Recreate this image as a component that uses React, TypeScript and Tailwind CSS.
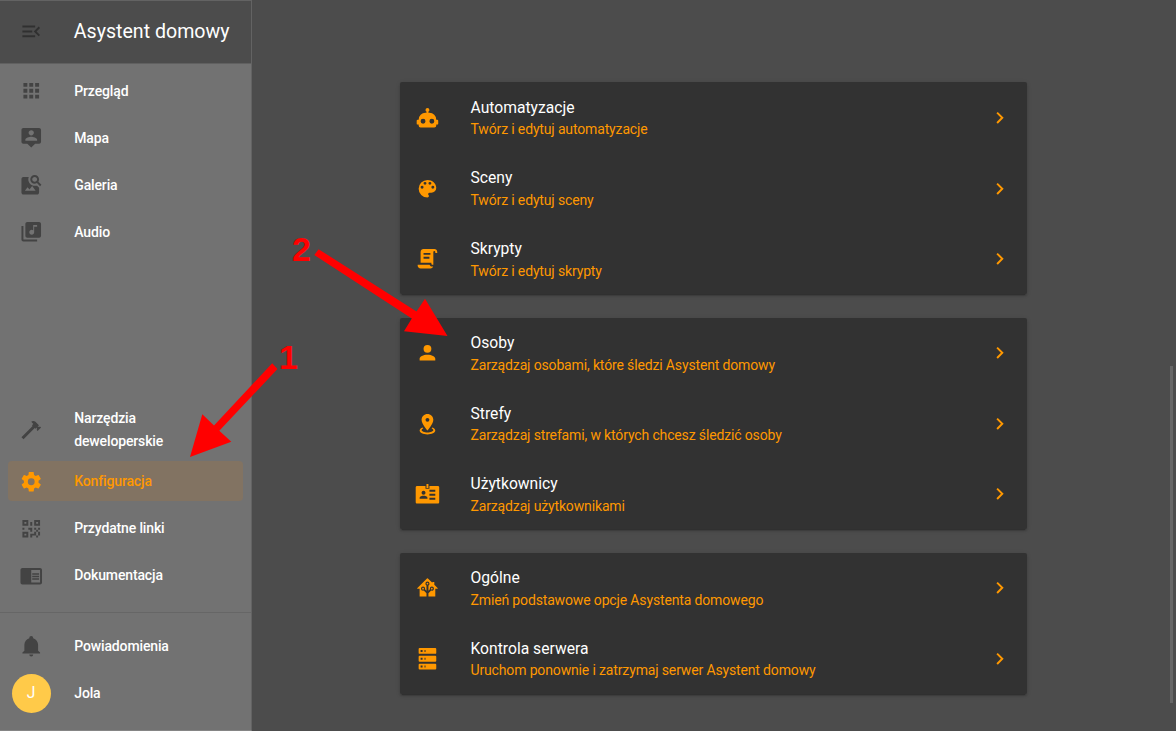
import React from "react";

const icons = {
  menuOpen:
    "M21,15.61L19.59,17L14.58,12L19.59,7L21,8.39L17.44,12L21,15.61M3,6H16V8H3V6M3,13V11H13V13H3M3,18V16H16V18H3Z",
  apps: "M16,20H20V16H16M16,14H20V10H16M10,8H14V4H10M16,8H20V4H16M10,14H14V10H10M4,14H8V10H4M4,20H8V16H4M10,20H14V16H10M4,8H8V4H4V8Z",
  tooltipAccount:
    "M20 2H4C2.89 2 2 2.89 2 4V16C2 17.11 2.9 18 4 18H8L12 22L16 18H20C21.11 18 22 17.11 22 16V4C22 2.89 21.1 2 20 2M12 4.3C13.5 4.3 14.7 5.5 14.7 7S13.5 9.7 12 9.7 9.3 8.5 9.3 7 10.5 4.3 12 4.3M18 15H6V14.1C6 12.1 10 11 12 11S18 12.1 18 14.1V15Z",
  imageSearch:
    "M15.5,9C16.2,9 16.79,8.76 17.27,8.27C17.76,7.79 18,7.2 18,6.5C18,5.83 17.76,5.23 17.27,4.73C16.79,4.23 16.2,4 15.5,4C14.83,4 14.23,4.23 13.73,4.73C13.23,5.23 13,5.83 13,6.5C13,7.2 13.23,7.79 13.73,8.27C14.23,8.76 14.83,9 15.5,9M19.31,8.91L22.41,12L21,13.41L17.86,10.31C17.08,10.78 16.28,11 15.47,11C14.22,11 13.16,10.58 12.3,9.7C11.45,8.83 11,7.77 11,6.5C11,5.27 11.45,4.2 12.33,3.33C13.2,2.45 14.27,2 15.5,2C16.77,2 17.83,2.45 18.7,3.33C19.58,4.2 20,5.27 20,6.5C20,7.33 19.78,8.13 19.31,8.91M16.5,18H5.5L8.25,14.5L10.22,16.83L12.94,13.31L16.5,18M18,13L20,15V20C20,20.55 19.81,21 19.41,21.4C19,21.79 18.53,22 18,22H4C3.45,22 3,21.79 2.6,21.4C2.21,21 2,20.55 2,20V6C2,5.47 2.21,5 2.6,4.59C3,4.19 3.45,4 4,4H9.5C9.2,4.64 9.03,5.31 9,6C9,8 9.5,9.5 10.75,10.95C12.06,12.45 13.5,13 15.5,13C16.4,13 17.2,12.85 18,13Z",
  musicBox:
    "M20 2H8c-1.1 0-2 .9-2 2v12c0 1.1.9 2 2 2h12c1.1 0 2-.9 2-2V4c0-1.1-.9-2-2-2zm-2 5h-3v5.5c0 1.38-1.12 2.5-2.5 2.5S10 13.88 10 12.5s1.12-2.5 2.5-2.5c.57 0 1.08.19 1.5.51V5h4v2zM4 6H2v14c0 1.1.9 2 2 2h14v-2H4V6z",
  hammer:
    "M2,19.63L13.43,8.2L12.72,7.5L14.14,6.07L12,3.89C13.2,2.7 15.09,2.7 16.27,3.89L19.87,7.5L18.45,8.91H21.29L22,9.62L18.45,13.21L17.74,12.5V9.62L16.27,11.04L15.56,10.33L4.13,21.76L2,19.63Z",
  cog: "M12,15.5A3.5,3.5 0 0,1 8.5,12A3.5,3.5 0 0,1 12,8.5A3.5,3.5 0 0,1 15.5,12A3.5,3.5 0 0,1 12,15.5M19.43,12.97C19.47,12.65 19.5,12.33 19.5,12C19.5,11.67 19.47,11.34 19.43,11L21.54,9.37C21.73,9.22 21.78,8.95 21.66,8.73L19.66,5.27C19.54,5.05 19.27,4.96 19.05,5.05L16.56,6.05C16.04,5.66 15.5,5.32 14.87,5.07L14.5,2.42C14.46,2.18 14.25,2 14,2H10C9.75,2 9.54,2.18 9.5,2.42L9.13,5.07C8.5,5.32 7.96,5.66 7.44,6.05L4.95,5.05C4.73,4.96 4.46,5.05 4.34,5.27L2.34,8.73C2.21,8.95 2.27,9.22 2.46,9.37L4.57,11C4.53,11.34 4.5,11.67 4.5,12C4.5,12.33 4.53,12.65 4.57,12.97L2.46,14.63C2.27,14.78 2.21,15.05 2.34,15.27L4.34,18.73C4.46,18.95 4.73,19.03 4.95,18.95L7.44,17.94C7.96,18.34 8.5,18.68 9.13,18.93L9.5,21.58C9.54,21.82 9.75,22 10,22H14C14.25,22 14.46,21.82 14.5,21.58L14.87,18.93C15.5,18.67 16.04,18.34 16.56,17.94L19.05,18.95C19.27,19.03 19.54,18.95 19.66,18.73L21.66,15.27C21.78,15.05 21.73,14.78 21.54,14.63L19.43,12.97Z",
  qrcode:
    "M3,11H5V13H3V11M11,5H13V9H11V5M9,11H13V15H11V13H9V11M15,11H17V13H19V11H21V13H19V15H21V19H19V21H17V19H13V21H11V17H15V15H17V13H15V11M19,19V15H17V19H19M15,3H21V9H15V3M17,5V7H19V5H17M3,3H9V9H3V3M5,5V7H7V5H5M3,15H9V21H3V15M5,17V19H7V17H5Z",
  reader:
    "M13 12h7v1.5h-7zm0-2.5h7V11h-7zm0 5h7V16h-7zM21 4H3c-1.1 0-2 .9-2 2v13c0 1.1.9 2 2 2h18c1.1 0 2-.9 2-2V6c0-1.1-.9-2-2-2zm0 15h-9V6h9v13z",
  bell: "M21,19V20H3V19L5,17V11C5,7.9 7.03,5.17 10,4.29C10,4.19 10,4.1 10,4A2,2 0 0,1 12,2A2,2 0 0,1 14,4C14,4.1 14,4.19 14,4.29C16.97,5.17 19,7.9 19,11V17L21,19M14,21A2,2 0 0,1 12,23A2,2 0 0,1 10,21",
  robot:
    "M12,2A2,2 0 0,1 14,4C14,4.74 13.6,5.39 13,5.73V7H14A7,7 0 0,1 21,14H22A1,1 0 0,1 23,15V18A1,1 0 0,1 22,19H21V20A2,2 0 0,1 19,22H5A2,2 0 0,1 3,20V19H2A1,1 0 0,1 1,18V15A1,1 0 0,1 2,14H3A7,7 0 0,1 10,7H11V5.73C10.4,5.39 10,4.74 10,4A2,2 0 0,1 12,2M7.5,13A2.5,2.5 0 0,0 5,15.5A2.5,2.5 0 0,0 7.5,18A2.5,2.5 0 0,0 10,15.5A2.5,2.5 0 0,0 7.5,13M16.5,13A2.5,2.5 0 0,0 14,15.5A2.5,2.5 0 0,0 16.5,18A2.5,2.5 0 0,0 19,15.5A2.5,2.5 0 0,0 16.5,13Z",
  palette:
    "M17.5,12A1.5,1.5 0 0,1 16,10.5A1.5,1.5 0 0,1 17.5,9A1.5,1.5 0 0,1 19,10.5A1.5,1.5 0 0,1 17.5,12M14.5,8A1.5,1.5 0 0,1 13,6.5A1.5,1.5 0 0,1 14.5,5A1.5,1.5 0 0,1 16,6.5A1.5,1.5 0 0,1 14.5,8M9.5,8A1.5,1.5 0 0,1 8,6.5A1.5,1.5 0 0,1 9.5,5A1.5,1.5 0 0,1 11,6.5A1.5,1.5 0 0,1 9.5,8M6.5,12A1.5,1.5 0 0,1 5,10.5A1.5,1.5 0 0,1 6.5,9A1.5,1.5 0 0,1 8,10.5A1.5,1.5 0 0,1 6.5,12M12,3A9,9 0 0,0 3,12A9,9 0 0,0 12,21A1.5,1.5 0 0,0 13.5,19.5C13.5,19.11 13.35,18.76 13.11,18.5C12.88,18.23 12.73,17.88 12.73,17.5A1.5,1.5 0 0,1 14.23,16H16A5,5 0 0,0 21,11C21,6.58 16.97,3 12,3Z",
  script:
    "M17.8,20C17.4,21.2 16.3,22 15,22H5C3.3,22 2,20.7 2,19V18H5L14.2,18C14.6,19.2 15.7,20 17,20H17.8M19,2C20.7,2 22,3.3 22,5V6H20V5C20,4.4 19.6,4 19,4C18.4,4 18,4.4 18,5V18H17C16.4,18 16,17.6 16,17V16H5V5C5,3.3 6.3,2 8,2H19M8,6V8H15V6H8M8,10V12H14V10H8Z",
  account:
    "M12,4A4,4 0 0,1 16,8A4,4 0 0,1 12,12A4,4 0 0,1 8,8A4,4 0 0,1 12,4M12,14C16.42,14 20,15.79 20,18V20H4V18C4,15.79 7.58,14 12,14Z",
  marker:
    "M12,2C15.31,2 18,4.66 18,7.95C18,12.41 12,19 12,19C12,19 6,12.41 6,7.95C6,4.66 8.69,2 12,2M12,6A2,2 0 0,0 10,8A2,2 0 0,0 12,10A2,2 0 0,0 14,8A2,2 0 0,0 12,6M20,19C20,21.21 16.42,23 12,23C7.58,23 4,21.21 4,19C4,17.71 5.22,16.56 7.11,15.83L7.75,16.74C6.67,17.19 6,17.81 6,18.5C6,19.88 8.69,21 12,21C15.31,21 18,19.88 18,18.5C18,17.81 17.33,17.19 16.25,16.74L16.89,15.83C18.78,16.56 20,17.71 20,19Z",
  badge:
    "M22.6 4H14V7H10V4H1.4C.6 4 0 4.6 0 5.4V20.6C0 21.4 .6 22 1.4 22H22.6C23.4 22 24 21.4 24 20.6V5.4C24 4.6 23.4 4 22.6 4M8 9C9.1 9 10 9.9 10 11S9.1 13 8 13 6 12.1 6 11 6.9 9 8 9M12 17H4V16C4 14.67 6.67 14 8 14S12 14.67 12 16V17M20 18H14V16H20V18M20 14H14V12H20V14M20 10H14V8H20V10M13 6H11V2H13V6Z",
  home: "M21.8,13H20V21H13V17.67L15.79,14.88L16.5,15C17.66,15 18.6,14.06 18.6,12.9C18.6,11.74 17.66,10.8 16.5,10.8A2.1,2.1 0 0,0 14.4,12.9L14.5,13.61L13,15.13V9.65C13.66,9.29 14.1,8.6 14.1,7.8A2.1,2.1 0 0,0 12,5.7A2.1,2.1 0 0,0 9.9,7.8C9.9,8.6 10.34,9.29 11,9.65V15.13L9.5,13.61L9.6,12.9A2.1,2.1 0 0,0 7.5,10.8A2.1,2.1 0 0,0 5.4,12.9A2.1,2.1 0 0,0 7.5,15L8.21,14.88L11,17.67V21H4V13H2.25C1.83,13 1.42,13 1.42,12.79C1.43,12.57 1.85,12.15 2.28,11.72L11,3C11.33,2.67 11.67,2.33 12,2.33C12.33,2.33 12.67,2.67 13,3L17,7V6H19V9L21.78,11.78C22.18,12.18 22.59,12.59 22.6,12.8C22.6,13 22.2,13 21.8,13M7.5,12A0.9,0.9 0 0,1 8.4,12.9A0.9,0.9 0 0,1 7.5,13.8A0.9,0.9 0 0,1 6.6,12.9A0.9,0.9 0 0,1 7.5,12M16.5,12C17,12 17.4,12.4 17.4,12.9C17.4,13.4 17,13.8 16.5,13.8A0.9,0.9 0 0,1 15.6,12.9A0.9,0.9 0 0,1 16.5,12M12,6.9C12.5,6.9 12.9,7.3 12.9,7.8C12.9,8.3 12.5,8.7 12,8.7C11.5,8.7 11.1,8.3 11.1,7.8C11.1,7.3 11.5,6.9 12,6.9Z",
  server:
    "M4,1H20A1,1 0 0,1 21,2V6A1,1 0 0,1 20,7H4A1,1 0 0,1 3,6V2A1,1 0 0,1 4,1M4,9H20A1,1 0 0,1 21,10V14A1,1 0 0,1 20,15H4A1,1 0 0,1 3,14V10A1,1 0 0,1 4,9M4,17H20A1,1 0 0,1 21,18V22A1,1 0 0,1 20,23H4A1,1 0 0,1 3,22V18A1,1 0 0,1 4,17M9,5H10V3H9V5M9,13H10V11H9V13M9,21H10V19H9V21M5,3V5H7V3H5M5,11V13H7V11H5M5,19V21H7V19H5Z",
  chevron: "M8.59,16.58L13.17,12L8.59,7.41L10,6L16,12L10,18L8.59,16.58Z",
};

type IconName = keyof typeof icons;

function Icon({ name, className = "", viewBox = "0 0 24 24" }: { name: IconName; className?: string; viewBox?: string }) {
  return (
    <svg viewBox={viewBox} fill="currentColor" fillRule="evenodd" className={`size-[23.5px] shrink-0 overflow-visible ${className}`}>
      <path d={icons[name]} />
    </svg>
  );
}

function NavItem({ icon, label, active = false, tall = false }: { icon: IconName; label: string; active?: boolean; tall?: boolean }) {
  return (
    <a
      className={`mx-2 flex items-center rounded-[4px] pl-[11.25px] ${tall ? "mb-2 h-[47px]" : "mb-[7.05px] h-10"} ${
        active ? "bg-[#827362] text-[#ff9800]" : "text-white"
      }`}
    >
      <Icon name={icon} viewBox="-0.5 0 24 24" className={active ? "" : "text-[#434343]"} />
      <span className="ml-[31.5px] w-[130px] text-[14px] leading-[23px] font-medium tracking-[-0.14px]">{label}</span>
    </a>
  );
}

function ConfigRow({ icon, title, text }: { icon: IconName; title: string; text: string }) {
  return (
    <div className="flex h-[70.56px] items-center pr-[15.5px] pl-[15.5px]">
      <Icon name={icon} viewBox="0.3 0 24 24" className="text-[#ff9800]" />
      <div className="ml-[31.5px] flex-1 self-start pt-[13.5px]">
        <div className="text-[15.67px] leading-[23px] text-white">{title}</div>
        <div className="mt-[0.48px] text-[14px] leading-[21.5px] tracking-[-0.145px] text-[#ff9800]">{text}</div>
      </div>
      <Icon name="chevron" className="text-[#ff9800]" />
    </div>
  );
}

function Card({ children }: { children: React.ReactNode }) {
  return (
    <section className="rounded-[2px] bg-[#323232] shadow-[0_2px_2px_0_rgba(0,0,0,0.14),0_1px_5px_0_rgba(0,0,0,0.12),0_3px_1px_-2px_rgba(0,0,0,0.2)]">
      {children}
    </section>
  );
}

export default function App() {
  return (
    <div className="relative flex h-[731px] w-[1176px] overflow-hidden bg-[#4c4c4c] font-[Roboto,sans-serif]">
      <aside className="flex w-[252px] shrink-0 flex-col border-t border-r border-b border-[#636363] border-b-[#858585] bg-[#727272]">
        <header className="flex h-[63px] shrink-0 items-center border-b border-[#606060] bg-[#4c4c4c] pl-[19.25px]">
          <Icon name="menuOpen" viewBox="-0.5 0.3 24 24" className="text-[#303030]" />
          <h1 className="ml-[31px] text-[19.6px] whitespace-nowrap text-white">Asystent domowy</h1>
        </header>
        <nav className="flex flex-1 flex-col pt-[7px]">
          <NavItem icon="apps" label="Przegląd" />
          <NavItem icon="tooltipAccount" label="Mapa" />
          <NavItem icon="imageSearch" label="Galeria" />
          <NavItem icon="musicBox" label="Audio" />
          <div className="flex-1" />
          <NavItem icon="hammer" label="Narzędzia deweloperskie" tall />
          <NavItem icon="cog" label="Konfiguracja" active />
          <NavItem icon="qrcode" label="Przydatne linki" />
          <NavItem icon="reader" label="Dokumentacja" />
        </nav>
        <footer className="mt-[9.5px] h-[118px] shrink-0 border-t border-[#666666] pt-[13px]">
          <NavItem icon="bell" label="Powiadomienia" />
          <a className="mx-2 flex h-10 items-center pl-[3.5px] text-white">
            <span className="flex size-[39px] items-center justify-center rounded-full bg-[#ffca49] text-[15.7px]">J</span>
            <span className="ml-[23.75px] text-[14px] font-medium tracking-[-0.14px]">Jola</span>
          </a>
        </footer>
      </aside>

      <main className="flex flex-1 flex-col gap-[23.52px] pt-[82.45px] pr-[149px] pl-[148px]">
        <Card>
          <ConfigRow icon="robot" title="Automatyzacje" text="Twórz i edytuj automatyzacje" />
          <ConfigRow icon="palette" title="Sceny" text="Twórz i edytuj sceny" />
          <ConfigRow icon="script" title="Skrypty" text="Twórz i edytuj skrypty" />
        </Card>
        <Card>
          <ConfigRow icon="account" title="Osoby" text="Zarządzaj osobami, które śledzi Asystent domowy" />
          <ConfigRow icon="marker" title="Strefy" text="Zarządzaj strefami, w których chcesz śledzić osoby" />
          <ConfigRow icon="badge" title="Użytkownicy" text="Zarządzaj użytkownikami" />
        </Card>
        <Card>
          <ConfigRow icon="home" title="Ogólne" text="Zmień podstawowe opcje Asystenta domowego" />
          <ConfigRow icon="server" title="Kontrola serwera" text="Uruchom ponownie i zatrzymaj serwer Asystent domowy" />
        </Card>
      </main>

      <div className="absolute top-[366px] left-[1170px] h-[337px] w-[3px] bg-[#666666]" />

      <svg className="absolute inset-0 h-full w-full" viewBox="0 0 1176 731" fill="#ff0000">
        <path d="M318.6 249.2L416.5 311.5L425 298.8L447.5 336L404 331.3L411.8 318.5L314.3 255Z" />
        <path d="M272.2 363.2L214 425.5L202.3 414.2L190 457L231.3 441.7L219.3 430.7L277.5 369Z" />
      </svg>
      <span className="absolute top-[230px] left-[292px] font-['Liberation_Sans',sans-serif] text-[34px] leading-[38px] font-bold text-[#ff0000]">2</span>
      <span className="absolute top-[338px] left-[279px] font-['Liberation_Sans',sans-serif] text-[34px] leading-[38px] font-bold text-[#ff0000]">1</span>
    </div>
  );
}
